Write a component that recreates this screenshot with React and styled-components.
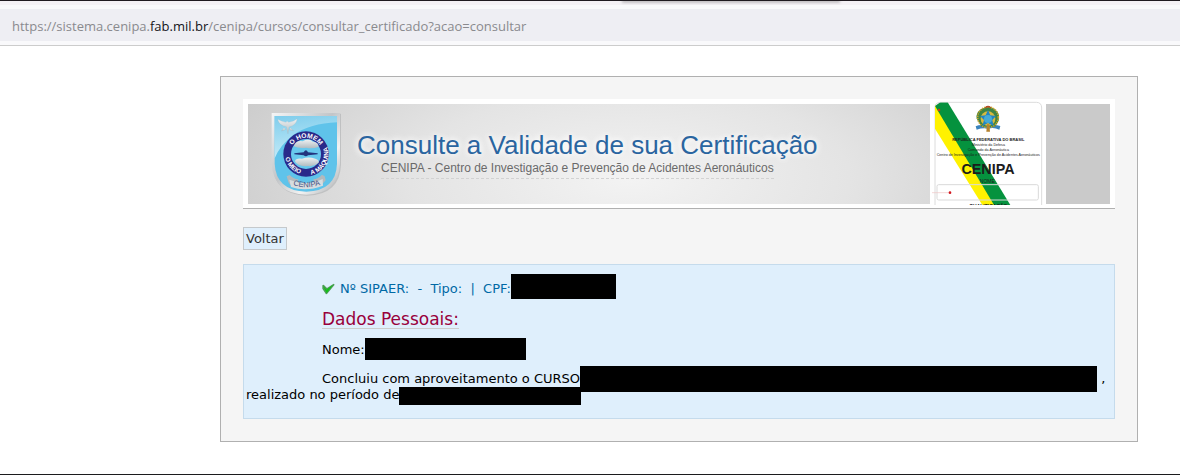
import React from 'react'
import styled, { createGlobalStyle } from 'styled-components'

function Shield() {
  return (
    <ShieldSvg viewBox="33 18 213 255" role="img" aria-label="CENIPA">
      <defs>
        <linearGradient id="rim" x1="0" y1="0" x2="1" y2="1">
          <stop offset="0" stopColor="#f4f5f6" />
          <stop offset="0.45" stopColor="#c2c5c8" />
          <stop offset="0.7" stopColor="#f2f2f2" />
          <stop offset="1" stopColor="#a9adb0" />
        </linearGradient>
        <linearGradient id="gloss" x1="0" y1="0" x2="0.2" y2="1">
          <stop offset="0" stopColor="#7fcdec" />
          <stop offset="1" stopColor="#c4ebf8" />
        </linearGradient>
        <linearGradient id="silver" x1="0" y1="0" x2="0" y2="1">
          <stop offset="0" stopColor="#eef1f2" />
          <stop offset="1" stopColor="#b2bcc1" />
        </linearGradient>
        <path id="ringTop" d="M 91 134 A 49 49 0 0 1 185 134" />
        <path id="ringLeft" d="M 75 146 A 63 63 0 0 0 132 209" />
        <path id="ringRight" d="M 144 210 A 63 63 0 0 0 197 117" />
        <path id="ribbonText" d="M 94 238 Q 137 255 186 238" />
      </defs>
      <path d="M36 26 H243 V178 Q240 270 141 272 Q42 270 38 178 Z" fill="#a5a7a9" opacity="0.5" />
      <path d="M35 24 H240 V176 Q236 266 139 269 Q40 266 35 176 Z" fill="url(#rim)" />
      <path d="M44 33 H231 V176 Q228 257 139 260 Q48 257 44 176 Z" fill="#5fc3ea" />
      <path d="M44 33 H231 V52 Q150 55 100 90 Q60 120 44 160 Z" fill="url(#gloss)" />
      <g fill="url(#silver)" stroke="#8fb4c4" strokeWidth="0.6">
        <path d="M79 65 Q57 62 53 43 Q68 51 78 52 Q81 46 86 52 Q98 51 112 41 Q108 62 87 66 L84 87 Z" />
        <path d="M72 68 L64 78 L77 74 Z M91 68 L101 77 L89 75 Z" />
      </g>
      <circle cx="138" cy="147" r="68" fill="#29298a" />
      <circle cx="138" cy="147" r="45" fill="#68c8ed" />
      <path d="M101 124 Q108 105 128 109 Q145 98 159 110 Q178 112 175 126 Q155 132 139 128 Q116 131 101 124 Z" fill="url(#silver)" />
      <path d="M105 169 Q106 159 126 161 Q146 154 166 161 Q178 164 176 173 Q161 186 145 183 Q112 186 105 169 Z" fill="url(#silver)" />
      <path d="M103 145 L131 142 Q138 130 144 142 L173 145 L173 148 L144 151 Q138 157 131 151 L103 148 Z" fill="#23347e" />
      <RingText fontSize="20">
        <textPath href="#ringTop" startOffset="50%" textAnchor="middle">O HOMEM</textPath>
      </RingText>
      <RingText fontSize="19">
        <textPath href="#ringLeft" startOffset="50%" textAnchor="middle">O MEIO</textPath>
      </RingText>
      <RingText fontSize="19">
        <textPath href="#ringRight" startOffset="50%" textAnchor="middle">A MÁQUINA</textPath>
      </RingText>
      <path d="M80 214 L89 210 Q100 222 115 223 L109 249 Q91 243 85 231 Z M194 214 L186 209 Q174 222 160 223 L166 249 Q184 243 197 226 Z" fill="#b2b9bd" />
      <path d="M88 224 Q138 245 188 222 L189 242 Q138 261 93 246 Z" fill="#d7dcdf" />
      <RibbonText fontSize="23">
        <textPath href="#ribbonText" startOffset="50%" textAnchor="middle">CENIPA</textPath>
      </RibbonText>
    </ShieldSvg>
  )
}

function IdCard() {
  return (
    <IdCardSvg viewBox="21 9 336 315" role="img" aria-label="Carteira CENIPA">
      <defs>
        <clipPath id="cardClip">
          <path d="M30 321 V28 Q30 13 47 13 H334 Q350 13 350 30 V321 Z" />
        </clipPath>
      </defs>
      <path d="M30 321 V28 Q30 13 47 13 H334 Q350 13 350 30 V321" fill="#fff" stroke="#dcdcdc" strokeWidth="3" />
      <g clipPath="url(#cardClip)">
        <path d="M30 20 L215 321 H172 L30 92 Z" fill="#fff200" />
        <path d="M30 24 L46 13 H68 L256 321 H207 Z" fill="#05923e" />
        <rect x="36" y="260" width="304" height="46" rx="5" fill="none" stroke="#d9d9d9" strokeWidth="3" />
        <g>
          <path d="M155 95 Q174 88 189 92 Q207 87 223 95 L226 84 Q204 77 188 86 Q170 77 152 85 Z" fill="#3a83bd" />
          <path d="M155 62 Q152 43 168 34 L181 28 Q189 21 198 28 L211 35 Q226 47 221 68 L210 86 H170 Z" fill="#3e8443" />
          <circle cx="189" cy="58" r="31" fill="none" stroke="#c9a329" strokeWidth="5" strokeDasharray="4 3" />
          <circle cx="189" cy="62" r="22" fill="#d9b93c" />
          <path d="M189 36 L196 52 L213 54 L202 66 L206 84 L189 75 L172 84 L177 66 L165 54 L182 52 Z" fill="#2385c1" />
          <circle cx="189" cy="63" r="12" fill="#45aad5" />
          <path d="M186 79 H193 L195 101 H184 Z" fill="#b5822e" />
          <path d="M181 29 Q189 22 197 29" fill="none" stroke="#b74a28" strokeWidth="4" />
        </g>
        <CardText x="190" y="128" fontSize="12" fontWeight="700">REPÚBLICA FEDERATIVA DO BRASIL</CardText>
        <CardText x="190" y="143" fontSize="11">Ministério da Defesa</CardText>
        <CardText x="190" y="158" fontSize="11">Comando da Aeronáutica</CardText>
        <CardText x="190" y="173" fontSize="11">Centro de Investigação e Prevenção de Acidentes Aeronáuticos</CardText>
        <CardText x="189" y="227" fontSize="43" fontWeight="700">CENIPA</CardText>
        <CardText x="187" y="254" fontSize="15">NOME</CardText>
        <CardText x="190" y="329" fontSize="15" fontWeight="700">QUALIFICAÇÃO</CardText>
      </g>
      <path d="M21 284 H74" stroke="#efc4c4" strokeWidth="2" />
      <circle cx="75" cy="284" r="4" fill="#d31920" />
      <circle cx="42" cy="36" r="4" fill="#c5381f" />
    </IdCardSvg>
  )
}

function Check() {
  return (
    <CheckSvg viewBox="0 0 39 36" aria-hidden="true">
      <path d="M1 7 L5 5 L15 15 L35 2 L38 5 L15 33 L12 34 L1 17 Z" fill="#4c9d55" />
      <path d="M3 9 L14 20 L33 5 L14 30 Z" fill="#10c414" />
    </CheckSvg>
  )
}

function App() {
  return (
    <>
      <GlobalStyle />
      <Browser>
        <Toolbar>
          <Address>
            https://sistema.cenipa.<b>fab.mil.br</b>/cenipa/cursos/consultar_certificado?acao=consultar
          </Address>
        </Toolbar>
        <Content>
          <Banner>
            <BannerMain>
              <Shield />
              <Titles>
                <Title>Consulte a Validade de sua Certificação</Title>
                <Subtitle>CENIPA - Centro de Investigação e Prevenção de Acidentes Aeronáuticos</Subtitle>
              </Titles>
            </BannerMain>
            <IdCard />
            <BannerEnd />
          </Banner>
          <BackButton type="button">Voltar</BackButton>
          <Result>
            <Line $color="#0069a5">
              <Check />
              Nº SIPAER:&nbsp; -&nbsp; Tipo:&nbsp; |&nbsp; CPF:
              <Redacted $width={105} $height={25} />
            </Line>
            <SectionTitle>Dados Pessoais:</SectionTitle>
            <Line>
              Nome:
              <Redacted $width={161} $height={22} />
            </Line>
            <Line>
              Concluiu com aproveitamento o CURSO
              <Redacted $width={517} $height={26} $drop={9} /> , realizado no período de
              <Redacted $width={182} $height={18} />
            </Line>
          </Result>
        </Content>
      </Browser>
    </>
  )
}

const GlobalStyle = createGlobalStyle`
  * {
    box-sizing: border-box;
  }

  body {
    margin: 0;
    background: #fff;
    font-family: Verdana, "DejaVu Sans", sans-serif;
    font-size: 13px;
    line-height: 16px;
    color: #000;
  }
`

const Browser = styled.div`
  border-top: 1px solid #1f1a20;
  border-bottom: 1px solid #1c1c1e;
`

const Toolbar = styled.header`
  position: relative;
  padding: 4px 0;
  background: #f9f9fb;
  border-top: 4px solid #f4f1f5;
  border-bottom: 1px solid #ccc;

  /* shadow of the tab strip above */
  &::before {
    content: '';
    position: absolute;
    top: -5px;
    left: 622px;
    width: 218px;
    height: 1px;
    background: #1f1a20;
    box-shadow: 0 1px 3px rgba(0, 0, 0, 0.6);
  }
`

const Address = styled.div`
  padding: 2px 12px 0;
  height: 32px;
  background: #eeeef3;
  color: #8a8a8e;
  font-family: "Segoe UI", "Open Sans", sans-serif;
  font-size: 13px;
  line-height: 30px;
  white-space: nowrap;
  overflow: hidden;

  b {
    color: #15141a;
    font-weight: 400;
  }
`

const Content = styled.main`
  margin: 30px 42px 32px 220px;
  padding: 22px;
  background: #f5f5f5;
  border: 1px solid #b0b0b0;
`

const Banner = styled.div`
  display: flex;
  align-items: center;
  gap: 2px;
  height: 110px;
  padding: 0 5px;
  background: #fff;
  border-bottom: 1px solid #b0b0b0;
`

const BannerMain = styled.div`
  flex: 1;
  display: flex;
  align-items: center;
  gap: 15px;
  height: 100px;
  padding-left: 23px;
  background: radial-gradient(ellipse 440px 180px at 56% 75%, #f3f3f3 0%, #e4e4e4 50%, #cbcbcb 100%);
`

const BannerEnd = styled.div`
  width: 64px;
  height: 100px;
  background: #cacaca;
`

const Titles = styled.div`
  display: flex;
  flex-direction: column;
  align-items: flex-start;
`

const Title = styled.h1`
  margin: 2px 0 0;
  color: #2a65a0;
  font-family: Arial, "Liberation Sans", sans-serif;
  font-size: 26px;
  font-weight: 400;
  line-height: 30px;
  text-shadow: 0 0 8px #fff, 0 0 6px #fff;
  white-space: nowrap;
`

const Subtitle = styled.p`
  margin: 0 0 0 24px;
  padding-bottom: 2px;
  border-bottom: 1px dashed #d2d2d2;
  color: #6a6a6a;
  font-family: Arial, "Liberation Sans", sans-serif;
  font-size: 12px;
  line-height: 16px;
  white-space: nowrap;
`

const BackButton = styled.button`
  display: block;
  margin: 18px 0 14px;
  padding: 0 2px;
  height: 23px;
  background: #dfeffc;
  border: 1px solid #c5c9cc;
  color: #333;
  font: inherit;
  cursor: pointer;
`

const Result = styled.section`
  display: flex;
  flex-direction: column;
  gap: 13px;
  padding: 16px 2px 15px;
  background: #dfeffc;
  border: 1px solid #c5dbec;
`

const Line = styled.p`
  margin: 0;
  text-indent: 76px;
  color: ${props => props.$color || '#000'};
`

const SectionTitle = styled.h2`
  align-self: flex-start;
  margin: 0 0 0 76px;
  border-bottom: 1px solid #ccc;
  color: #99003b;
  font-size: 17px;
  font-weight: 400;
  line-height: 18px;
`

/* negative margins keep the tall bars from stretching the text line */
const Redacted = styled.span`
  display: inline-block;
  width: ${props => props.$width}px;
  height: ${props => props.$height}px;
  margin: -8px 0 -${props => props.$drop || 6}px;
  background: #000;
`

const ShieldSvg = styled.svg`
  flex: none;
  width: 71px;
  height: 85px;
`

const RingText = styled.text`
  fill: #fff;
  font-family: Arial, "Liberation Sans", sans-serif;
  font-weight: 700;
`

const RibbonText = styled.text`
  fill: #4b5684;
  font-family: Arial, "Liberation Sans", sans-serif;
`

const IdCardSvg = styled.svg`
  flex: none;
  width: 112px;
  height: 105px;
`

const CardText = styled.text`
  fill: #1c1c1c;
  font-family: "Arial Narrow", "Liberation Sans Narrow", "Liberation Sans", sans-serif;
  text-anchor: middle;
`

const CheckSvg = styled.svg`
  width: 13px;
  height: 12px;
  margin-right: 5px;
  vertical-align: -2px;
`

export default App
